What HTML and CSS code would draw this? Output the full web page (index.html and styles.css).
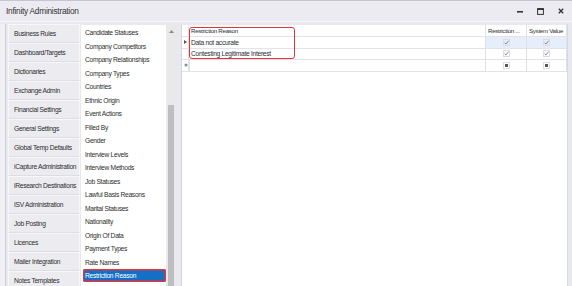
FILE: index.html
```html
<!DOCTYPE html>
<html lang="en">
<head>
  <meta charset="UTF-8">
  <title>Infinity Administration</title>
  <link rel="stylesheet" href="styles.css">
</head>
<body>

  <div class="window">
    <div class="titlebar">
      <span class="title">Infinity Administration</span>
      <div class="controls">
        <svg width="6" height="6" viewBox="0 0 6 6"><rect x="0" y="3" width="6" height="1.6" fill="#333"/></svg>
        <svg width="7" height="7" viewBox="0 0 7 7"><rect x="0.6" y="0.6" width="5.8" height="5.8" fill="none" stroke="#333" stroke-width="1"/><rect x="0.6" y="0.6" width="5.8" height="1.4" fill="#333"/></svg>
        <svg width="6" height="6" viewBox="0 0 6 6"><path d="M0.8 0.8 L5.2 5.2 M5.2 0.8 L0.8 5.2" stroke="#333" stroke-width="1.3"/></svg>
      </div>
    </div>

    <div class="main">
      <div class="edge"></div>

      <!-- Admin sections -->
      <ul class="nav">
        <li>Business Rules</li>
        <li>Dashboard/Targets</li>
        <li>Dictionaries</li>
        <li>Exchange Admin</li>
        <li>Financial Settings</li>
        <li>General Settings</li>
        <li>Global Temp Defaults</li>
        <li>iCapture Administration</li>
        <li>iResearch Destinations</li>
        <li>ISV Administration</li>
        <li>Job Posting</li>
        <li>Licences</li>
        <li>Mailer Integration</li>
        <li>Notes Templates</li>
      </ul>

      <!-- Dictionary list -->
      <div class="lookup">
        <ul class="lookup-list">
          <li>Candidate Statuses</li>
          <li>Company Competitors</li>
          <li>Company Relationships</li>
          <li>Company Types</li>
          <li>Countries</li>
          <li>Ethnic Origin</li>
          <li>Event Actions</li>
          <li>Filled By</li>
          <li>Gender</li>
          <li>Interview Levels</li>
          <li>Interview Methods</li>
          <li>Job Statuses</li>
          <li>Lawful Basis Reasons</li>
          <li>Marital Statuses</li>
          <li>Nationality</li>
          <li>Origin Of Data</li>
          <li>Payment Types</li>
          <li>Rate Names</li>
          <li class="selected">Restriction Reason</li>
        </ul>
        <div class="scrollbar">
          <svg class="scroll-up" width="5" height="3" viewBox="0 0 5 3"><path d="M0 3 L2.5 0 L5 3 Z" fill="#8a8a8a"/></svg>
          <div class="thumb"></div>
        </div>
      </div>

      <!-- Values grid -->
      <div class="grid">
        <div class="grid-row grid-head">
          <div class="cell ind"></div>
          <div class="cell">Restriction Reason</div>
          <div class="cell">Restriction ...</div>
          <div class="cell">System Value</div>
        </div>
        <div class="grid-row focused">
          <div class="cell ind"><svg width="3" height="4" viewBox="0 0 3 4"><path d="M0 0 L3 2 L0 4 Z" fill="#555"/></svg></div>
          <div class="cell">Data not accurate</div>
          <div class="cell check"><svg width="7" height="7" viewBox="0 0 7 7"><rect x="0.5" y="0.5" width="6" height="6" fill="none" stroke="#dcdce6"/><path d="M1.6 3.8 L3 5.1 L5.5 1.7" fill="none" stroke="#6e6e6e" stroke-width="0.8"/></svg></div>
          <div class="cell check"><svg width="7" height="7" viewBox="0 0 7 7"><rect x="0.5" y="0.5" width="6" height="6" fill="none" stroke="#dcdce6"/><path d="M1.6 3.8 L3 5.1 L5.5 1.7" fill="none" stroke="#6e6e6e" stroke-width="0.8"/></svg></div>
        </div>
        <div class="grid-row">
          <div class="cell ind"></div>
          <div class="cell">Contesting Legitimate Interest</div>
          <div class="cell check"><svg width="7" height="7" viewBox="0 0 7 7"><rect x="0.5" y="0.5" width="6" height="6" fill="none" stroke="#dcdce6"/><path d="M1.6 3.8 L3 5.1 L5.5 1.7" fill="none" stroke="#6e6e6e" stroke-width="0.8"/></svg></div>
          <div class="cell check"><svg width="7" height="7" viewBox="0 0 7 7"><rect x="0.5" y="0.5" width="6" height="6" fill="none" stroke="#dcdce6"/><path d="M1.6 3.8 L3 5.1 L5.5 1.7" fill="none" stroke="#6e6e6e" stroke-width="0.8"/></svg></div>
        </div>
        <div class="grid-row new-row">
          <div class="cell ind"><svg width="4" height="4" viewBox="0 0 4 4"><circle cx="2" cy="2" r="1.5" fill="#8c8c8c"/></svg></div>
          <div class="cell new-cell"></div>
          <div class="cell check"><svg width="7" height="7" viewBox="0 0 7 7"><rect x="0.5" y="0.5" width="6" height="6" fill="none" stroke="#dcdce6"/><rect x="2" y="2" width="3" height="3" fill="#555"/></svg></div>
          <div class="cell check"><svg width="7" height="7" viewBox="0 0 7 7"><rect x="0.5" y="0.5" width="6" height="6" fill="none" stroke="#dcdce6"/><rect x="2" y="2" width="3" height="3" fill="#555"/></svg></div>
        </div>
        <div class="highlight"></div>
      </div>

      <div class="edge-right"></div>
    </div>
  </div>

</body>
</html>
```

FILE: styles.css
```css
body {
  margin: 0;
  font-family: "Liberation Sans", Arial, sans-serif;
  font-size: 6.7px;
  letter-spacing: -0.3px;
  color: #2e2e2e;
  background: #e8e8ef;
  overflow: hidden;
}

ul {
  list-style: none;
  margin: 0;
  padding: 0;
}

.window {
  width: 572px;
  height: 286px;
  display: flex;
  flex-direction: column;
  overflow: hidden;
}

/* Title bar */
.titlebar {
  height: 20px;
  flex-shrink: 0;
  display: flex;
  align-items: center;
  justify-content: space-between;
  background: #ebebf1;
  border-top: 1px solid #c4c4d8;
  padding: 0 8px 0 6px;
}

.title {
  font-size: 8.3px;
  letter-spacing: -0.25px;
  color: #333;
}

.controls {
  display: flex;
  align-items: center;
  gap: 14px;
}

/* Main area */
.main {
  flex: 1;
  display: flex;
  padding-top: 2px;
  border-top: 1px solid #f6f6f9;
  background: #e8e8ef;
  min-height: 0;
}

.edge {
  width: 5px;
  flex-shrink: 0;
  background: #f1f1f5;
  border-right: 1px solid #cdcddb;
  margin-right: 1px;
}

.nav {
  width: 72px;
  flex-shrink: 0;
  margin-left: 1px;
}

.nav li {
  height: 17px;
  line-height: 17px;
  padding-left: 5px;
  background: #ebebf0;
  border: 1px solid #f7f7fa;
  border-bottom-color: #dddde5;
  white-space: nowrap;
}

/* Lookup list */
.lookup {
  display: flex;
  margin-left: 1px;
  margin-top: 1px;
}

.lookup-list {
  width: 85px;
  background: #fff;
  padding-top: 1px;
}

.lookup-list li {
  height: 13.5px;
  line-height: 13.5px;
  padding-left: 4px;
  white-space: nowrap;
}

.lookup-list li.selected {
  background: #1470c6;
  color: #fff;
  margin: 0 0 0 2px;
  padding-left: 2px;
  height: 13px;
  line-height: 13px;
  border-radius: 2px;
  box-shadow: inset 0 0 0 1.5px #e3343a;
}

.scrollbar {
  width: 10px;
  background: #e9e9e9;
  display: flex;
  flex-direction: column;
  align-items: center;
}

.scroll-up {
  margin-top: 5px;
}

.thumb {
  width: 6px;
  flex: 1;
  margin-top: 72px;
  background: #bdbdc2;
}

/* Values grid */
.grid {
  position: relative;
  flex: 1;
  margin-left: 5px;
  margin-top: 1px;
  background: #fff;
  border-left: 1px solid #d4d4e2;
}

.grid-row {
  display: grid;
  grid-template-columns: 7px 297px 41px 40px;
  height: 11.5px;
  border-bottom: 1px solid #e2e2ec;
  box-sizing: border-box;
}

.grid-head {
  height: 12px;
}

.cell {
  display: flex;
  align-items: center;
  padding-left: 2px;
  border-right: 1px solid #e0e0ea;
  white-space: nowrap;
  overflow: hidden;
}

.grid-head .cell {
  font-size: 6.2px;
}

.cell.check {
  justify-content: center;
  padding-left: 0;
}

.focused .check {
  background: #e6eefb;
}

.new-cell {
  border-left: 1px solid #e2e2ec;
}

.highlight {
  position: absolute;
  left: 7px;
  top: 1.5px;
  width: 104px;
  height: 30px;
  border: 1.5px solid #e3343a;
  border-radius: 3px;
}

.edge-right {
  width: 5px;
  flex-shrink: 0;
  background: #e8e8ef;
  border-left: 1px solid #d8d8e4;
}
```
